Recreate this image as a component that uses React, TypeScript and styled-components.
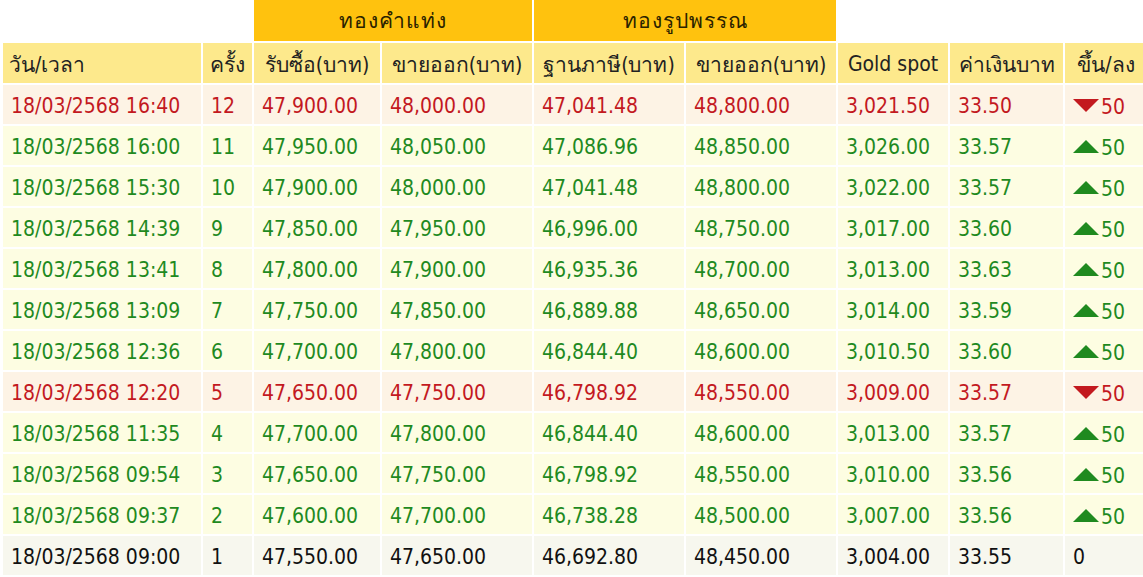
import React from "react";
import styled, { createGlobalStyle } from "styled-components";

const GlobalStyle = createGlobalStyle`
  * { box-sizing: border-box; }
  body {
    margin: 0;
    background: #ffffff;
    overflow: hidden;
    font-family: Tahoma, "DejaVu Sans Condensed", "DejaVu Sans", sans-serif;
  }
`;

type Trend = "up" | "down" | "flat";

const palette = {
  up: { bg: "#fdfde2", fg: "#1f8a1f" },
  down: { bg: "#fdf3e5", fg: "#c3191f" },
  flat: { bg: "#f7f7ee", fg: "#111111" },
};

const Table = styled.table`
  border-collapse: separate;
  border-spacing: 2px;
  table-layout: fixed;
  width: 1148px;
  margin: -2px 0 0 1px;
  font-size: 21px;
`;

const GroupCell = styled.th<{ $blank?: boolean }>`
  height: 41px;
  padding: 0;
  font-weight: normal;
  text-align: center;
  color: #2a2200;
  letter-spacing: 1px;
  background: ${(p) => (p.$blank ? "transparent" : "#ffc20e")};
`;

const HeadCell = styled.th<{ $left?: boolean }>`
  height: 40px;
  padding: 2px 6px 0;
  font-weight: normal;
  white-space: nowrap;
  color: #222222;
  background: #fde98c;
  text-align: ${(p) => (p.$left ? "left" : "center")};
`;

const Row = styled.tr<{ $trend: Trend }>`
  background: ${(p) => palette[p.$trend].bg};
  color: ${(p) => palette[p.$trend].fg};
`;

const Cell = styled.td`
  height: 39px;
  padding: 3px 8px 0;
  white-space: nowrap;
`;

const Change = styled.span`
  display: inline-flex;
  align-items: center;
  gap: 2px;
`;

const Arrow = styled.span<{ $dir: "up" | "down" }>`
  width: 0;
  height: 0;
  border-left: 13px solid transparent;
  border-right: 13px solid transparent;
  ${(p) =>
    p.$dir === "up"
      ? "border-bottom: 13px solid #1f8a1f; margin-top: -4px;"
      : "border-top: 13px solid #c3191f; margin-top: -2px;"}
`;

type Entry = {
  time: string;
  n: number;
  barBuy: string;
  barSell: string;
  ornBase: string;
  ornSell: string;
  spot: string;
  thb: string;
  trend: Trend;
  change: string;
};

const rows: Entry[] = [
  { time: "18/03/2568 16:40", n: 12, barBuy: "47,900.00", barSell: "48,000.00", ornBase: "47,041.48", ornSell: "48,800.00", spot: "3,021.50", thb: "33.50", trend: "down", change: "50" },
  { time: "18/03/2568 16:00", n: 11, barBuy: "47,950.00", barSell: "48,050.00", ornBase: "47,086.96", ornSell: "48,850.00", spot: "3,026.00", thb: "33.57", trend: "up", change: "50" },
  { time: "18/03/2568 15:30", n: 10, barBuy: "47,900.00", barSell: "48,000.00", ornBase: "47,041.48", ornSell: "48,800.00", spot: "3,022.00", thb: "33.57", trend: "up", change: "50" },
  { time: "18/03/2568 14:39", n: 9, barBuy: "47,850.00", barSell: "47,950.00", ornBase: "46,996.00", ornSell: "48,750.00", spot: "3,017.00", thb: "33.60", trend: "up", change: "50" },
  { time: "18/03/2568 13:41", n: 8, barBuy: "47,800.00", barSell: "47,900.00", ornBase: "46,935.36", ornSell: "48,700.00", spot: "3,013.00", thb: "33.63", trend: "up", change: "50" },
  { time: "18/03/2568 13:09", n: 7, barBuy: "47,750.00", barSell: "47,850.00", ornBase: "46,889.88", ornSell: "48,650.00", spot: "3,014.00", thb: "33.59", trend: "up", change: "50" },
  { time: "18/03/2568 12:36", n: 6, barBuy: "47,700.00", barSell: "47,800.00", ornBase: "46,844.40", ornSell: "48,600.00", spot: "3,010.50", thb: "33.60", trend: "up", change: "50" },
  { time: "18/03/2568 12:20", n: 5, barBuy: "47,650.00", barSell: "47,750.00", ornBase: "46,798.92", ornSell: "48,550.00", spot: "3,009.00", thb: "33.57", trend: "down", change: "50" },
  { time: "18/03/2568 11:35", n: 4, barBuy: "47,700.00", barSell: "47,800.00", ornBase: "46,844.40", ornSell: "48,600.00", spot: "3,013.00", thb: "33.57", trend: "up", change: "50" },
  { time: "18/03/2568 09:54", n: 3, barBuy: "47,650.00", barSell: "47,750.00", ornBase: "46,798.92", ornSell: "48,550.00", spot: "3,010.00", thb: "33.56", trend: "up", change: "50" },
  { time: "18/03/2568 09:37", n: 2, barBuy: "47,600.00", barSell: "47,700.00", ornBase: "46,738.28", ornSell: "48,500.00", spot: "3,007.00", thb: "33.56", trend: "up", change: "50" },
  { time: "18/03/2568 09:00", n: 1, barBuy: "47,550.00", barSell: "47,650.00", ornBase: "46,692.80", ornSell: "48,450.00", spot: "3,004.00", thb: "33.55", trend: "flat", change: "0" },
];

const widths = [198, 49, 126, 150, 150, 150, 110, 113, 82];

const App = () => {
  return (
    <>
      <GlobalStyle />
      <Table>
        <colgroup>
          {widths.map((w, i) => (
            <col key={i} style={{ width: w }} />
          ))}
        </colgroup>
        <thead>
          <tr>
            <GroupCell $blank colSpan={2} />
            <GroupCell colSpan={2}>ทองคำแท่ง</GroupCell>
            <GroupCell colSpan={2}>ทองรูปพรรณ</GroupCell>
            <GroupCell $blank colSpan={3} />
          </tr>
          <tr>
            <HeadCell $left>วัน/เวลา</HeadCell>
            <HeadCell>ครั้ง</HeadCell>
            <HeadCell>รับซื้อ(บาท)</HeadCell>
            <HeadCell>ขายออก(บาท)</HeadCell>
            <HeadCell>ฐานภาษี(บาท)</HeadCell>
            <HeadCell>ขายออก(บาท)</HeadCell>
            <HeadCell>Gold spot</HeadCell>
            <HeadCell>ค่าเงินบาท</HeadCell>
            <HeadCell>ขึ้น/ลง</HeadCell>
          </tr>
        </thead>
        <tbody>
          {rows.map((r) => (
            <Row key={r.n} $trend={r.trend}>
              <Cell>{r.time}</Cell>
              <Cell>{r.n}</Cell>
              <Cell>{r.barBuy}</Cell>
              <Cell>{r.barSell}</Cell>
              <Cell>{r.ornBase}</Cell>
              <Cell>{r.ornSell}</Cell>
              <Cell>{r.spot}</Cell>
              <Cell>{r.thb}</Cell>
              <Cell>
                <Change>
                  {r.trend !== "flat" && <Arrow $dir={r.trend} />}
                  {r.change}
                </Change>
              </Cell>
            </Row>
          ))}
        </tbody>
      </Table>
    </>
  );
};

export default App;
